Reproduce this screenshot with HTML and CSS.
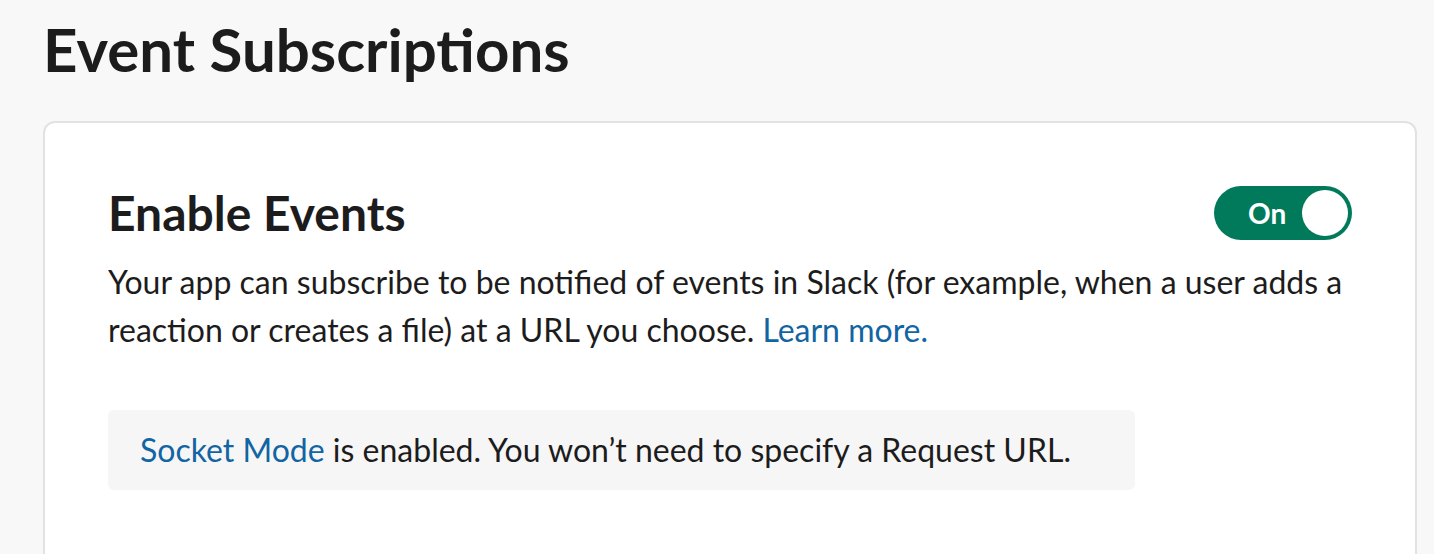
FILE: index.html
```html
<!DOCTYPE html>
<html lang="en">
<head>
<meta charset="utf-8">
<title>Event Subscriptions</title>
<link rel="stylesheet" href="styles.css">
</head>
<body>
<main class="page">
  <h1 class="page-title">Event Subscriptions</h1>
  <section class="card">
    <div class="card-head">
      <h2 class="card-title">Enable Events</h2>
      <button class="toggle" type="button" aria-pressed="true">
        <span class="toggle-label">On</span>
        <span class="toggle-knob"></span>
      </button>
    </div>
    <p class="card-desc">Your app can subscribe to be notified of events in Slack (for example, when a user adds a reaction or creates a file) at a URL you choose. <a class="link" href="#">Learn more.</a></p>
    <div class="notice"><a class="link" href="#">Socket Mode</a> is enabled. You won’t need to specify a Request URL.</div>
  </section>
</main>
</body>
</html>
```

FILE: styles.css
```css
* { box-sizing: border-box; }
html, body {
  margin: 0;
  padding: 0;
  background: #f8f8f8;
  height: 100%;
  overflow: hidden;
}
body {
  font-family: Lato, "Noto Sans", sans-serif;
  color: #1d1c1d;
}
.page {
  padding: 12px 17px 0 43px;
}
.page-title {
  margin: 0;
  font-size: 60px;
  line-height: 75px;
  font-weight: 700;
  letter-spacing: 0;
}
.card {
  margin-top: 34px;
  background: #fff;
  border: 2px solid #e2e2e2;
  border-bottom: none;
  border-radius: 12px 12px 0 0;
  padding: 60px 63px 80px 63px;
  min-height: 500px;
}
.card-head {
  display: flex;
  align-items: center;
  justify-content: space-between;
}
.card-title {
  margin: 0;
  font-size: 48px;
  line-height: 60px;
  font-weight: 700;
}
.toggle {
  display: flex;
  align-items: center;
  justify-content: space-between;
  width: 138px;
  height: 54px;
  padding: 0 4px 0 34px;
  border: none;
  border-radius: 27px;
  background: #007a5a;
  cursor: pointer;
}
.toggle-label {
  color: #fff;
  font-family: Lato, sans-serif;
  font-weight: 700;
  font-size: 28px;
  line-height: 1;
}
.toggle-knob {
  width: 46px;
  height: 46px;
  border-radius: 50%;
  background: #fff;
}
.card-desc {
  margin: 15px 0 0;
  font-size: 32px;
  line-height: 48px;
}
.link {
  color: #1264a3;
  text-decoration: none;
}
.notice {
  margin-top: 56px;
  width: 1027px;
  padding: 16px 32px;
  background: #f6f6f6;
  border-radius: 6px;
  font-size: 32px;
  line-height: 48px;
}
```
